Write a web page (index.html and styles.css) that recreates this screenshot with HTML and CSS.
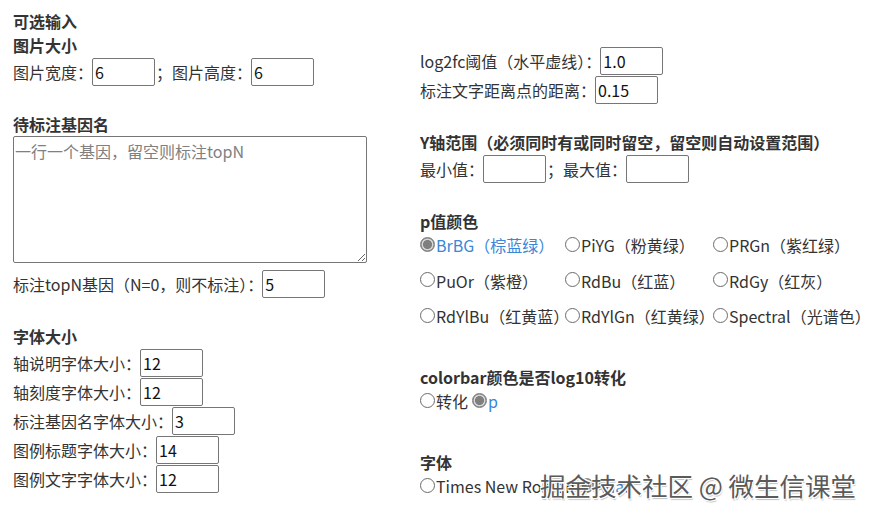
FILE: index.html
```html
<!DOCTYPE html>
<html lang="zh">
<head>
<meta charset="utf-8">
<title>可选输入</title>
<link rel="stylesheet" href="styles.css">
</head>
<body>
<div class="page">
  <div class="col left">
    <div class="h">可选输入</div>
    <div class="h">图片大小</div>
    <div class="row">图片宽度：<input class="num" type="text" value="6"><span class="sep">；图片高度：</span><input class="num" type="text" value="6"></div>

    <div class="h gap">待标注基因名</div>
    <textarea class="genes" placeholder="一行一个基因，留空则标注topN"></textarea>
    <div class="row after-ta">标注topN基因（N=0，则不标注）：<input class="num" type="text" value="5"></div>

    <div class="h gap">字体大小</div>
    <div class="row">轴说明字体大小：<input class="num" type="text" value="12"></div>
    <div class="row">轴刻度字体大小：<input class="num" type="text" value="12"></div>
    <div class="row">标注基因名字体大小：<input class="num" type="text" value="3"></div>
    <div class="row">图例标题字体大小：<input class="num" type="text" value="14"></div>
    <div class="row">图例文字字体大小：<input class="num" type="text" value="12"></div>
  </div>

  <div class="col right">
    <div class="row first">log2fc阈值（水平虚线）：<input class="num" type="text" value="1.0"></div>
    <div class="row">标注文字距离点的距离：<input class="num" type="text" value="0.15"></div>

    <div class="h gap">Y轴范围（必须同时有或同时留空，留空则自动设置范围）</div>
    <div class="row">最小值：<input class="num" type="text" value=""><span class="sep">；最大值：</span><input class="num" type="text" value=""></div>

    <div class="h gap">p值颜色</div>
    <div class="radios">
      <label class="opt on"><input type="radio" name="pc" checked>BrBG（棕蓝绿）</label>
      <label class="opt"><input type="radio" name="pc">PiYG（粉黄绿）</label>
      <label class="opt"><input type="radio" name="pc">PRGn（紫红绿）</label>
      <label class="opt"><input type="radio" name="pc">PuOr（紫橙）</label>
      <label class="opt"><input type="radio" name="pc">RdBu（红蓝）</label>
      <label class="opt"><input type="radio" name="pc">RdGy（红灰）</label>
      <label class="opt"><input type="radio" name="pc">RdYlBu（红黄蓝）</label>
      <label class="opt"><input type="radio" name="pc">RdYlGn（红黄绿）</label>
      <label class="opt"><input type="radio" name="pc">Spectral（光谱色）</label>
    </div>

    <div class="h gap2">colorbar颜色是否log10转化</div>
    <div class="inline-radios">
      <label class="opt"><input type="radio" name="cb">转化</label>
      <label class="opt on sp"><input type="radio" name="cb" checked>p</label>
    </div>

    <div class="h gap2">字体</div>
    <div class="inline-radios">
      <label class="opt"><input type="radio" name="ft">Times New Roman</label>
      <label class="opt on sp"><input type="radio" name="ft" checked>Arial</label>
    </div>
  </div>
</div>
<div class="watermark">掘金技术社区 @ 微生信课堂</div>
</body>
</html>
```

FILE: styles.css
```css
html, body {
  margin: 0;
  padding: 0;
  background: #ffffff;
}
body {
  font-family: "Noto Sans CJK SC", "Noto Sans", sans-serif;
  font-size: 16px;
  color: #333333;
  position: relative;
  width: 870px;
  height: 516px;
  overflow: hidden;
}
.page {
  display: flex;
  padding: 9px 0 0 13px;
}
.col.left {
  width: 407px;
  flex: none;
}
.col.right {
  flex: 1;
}
.h {
  font-weight: 700;
  line-height: 24px;
  height: 24px;
  white-space: nowrap;
}
.gap {
  margin-top: 26px;
}
.gap2 {
  margin-top: 37px;
}
.row {
  display: flex;
  align-items: center;
  height: 29px;
  white-space: nowrap;
  line-height: 24px;
}
.row.first {
  margin-top: 37px;
}
.num {
  box-sizing: border-box;
  width: 63px;
  height: 28px;
  margin: 0 0 0 -1px;
  padding: 1px 2px;
  border: 1px solid #767676;
  border-radius: 2px;
  font-family: "Noto Sans CJK SC", "Noto Sans", sans-serif;
  font-size: 16px;
  color: #111111;
  background: #ffffff;
  outline: none;
}
.sep {
  margin-left: 1px;
}
.genes {
  display: block;
  box-sizing: border-box;
  width: 354px;
  height: 127px;
  margin: 0;
  padding: 2px 1px;
  border: 1px solid #767676;
  border-radius: 2px;
  font-family: "Noto Sans CJK SC", "Noto Sans", sans-serif;
  font-size: 16px;
  line-height: 24px;
  color: #111111;
  resize: both;
  outline: none;
}
.genes::placeholder {
  color: #808080;
}
.after-ta {
  margin-top: 6px;
}
.radios {
  display: grid;
  grid-template-columns: 145px 148px auto;
  grid-auto-rows: 24px;
  row-gap: 11.5px;
}
.opt {
  display: flex;
  align-items: center;
  line-height: 24px;
  white-space: nowrap;
}
.opt.on {
  color: #3a87d8;
}
.opt input {
  appearance: none;
  -webkit-appearance: none;
  box-sizing: border-box;
  width: 15px;
  height: 15px;
  margin: 0 1px 0 0;
  border: 1px solid #6b6b6b;
  border-radius: 50%;
  background: #ffffff;
  flex: none;
  position: relative;
  top: -1px;
}
.opt input:checked {
  border: 1px solid #7c7c7c;
  background: radial-gradient(circle, #7f7f7f 0 4.2px, #d6d6d6 4.8px 5.6px, #8f8f8f 6.2px);
}
.inline-radios {
  display: flex;
  height: 24px;
}
.opt.sp {
  margin-left: 4px;
}
.watermark {
  position: absolute;
  left: 540px;
  top: 468px;
  font-family: "Noto Sans CJK SC", sans-serif;
  font-size: 25.5px;
  line-height: 34px;
  color: #5a5a5a;
  white-space: nowrap;
  text-shadow: 1px 1px 0 #ffffff, -1px -1px 0 #ffffff, 1px -1px 0 #ffffff, -1px 1px 0 #ffffff, 1px 2px 1px rgba(0,0,0,0.25);
}
```
